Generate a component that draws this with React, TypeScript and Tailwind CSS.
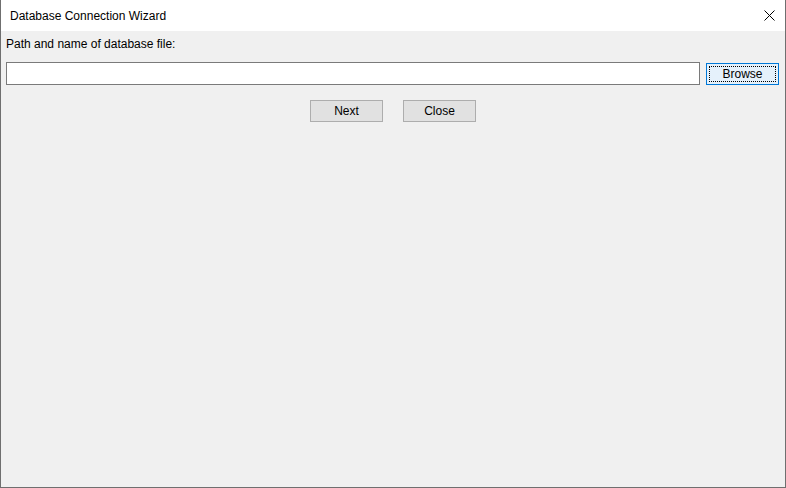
export default function App() {
  return (
    <div
      className="w-[786px] h-[488px] flex flex-col bg-[#f0f0f0] border-x border-b border-[#6f6f6f] text-[12px] text-black overflow-hidden"
      style={{ fontFamily: '"Liberation Sans", Arial, sans-serif' }}
    >
      {/* Title bar */}
      <div className="h-[31px] bg-white flex items-center justify-between shrink-0">
        <span className="pl-[9px] text-[12px]">Database Connection Wizard</span>
        <button className="h-[31px] pr-[10px] flex items-center justify-center">
          <svg width="11" height="11" viewBox="0 0 11 11">
            <path d="M0.5 0.5L10.5 10.5M10.5 0.5L0.5 10.5" stroke="#000" strokeWidth="1" fill="none" />
          </svg>
        </button>
      </div>

      {/* Body */}
      <div className="flex flex-col px-[5px]">
        <div className="h-[24px] flex items-center mt-[1px]">Path and name of database file:</div>
        <div className="flex items-center mt-[6px] h-[23px]">
          <input className="w-[694px] h-[23px] bg-white border border-[#7a7a7a] outline-none" />
          <button className="ml-[6px] w-[73px] h-[22px] mt-[1px] bg-[#e5f1fb] border border-[#0078d7] p-[2px]">
            <span className="flex items-center justify-center w-full h-full border border-dotted border-black leading-none">
              Browse
            </span>
          </button>
        </div>
        <div className="flex justify-center gap-[20px] mt-[15px]">
          <button className="w-[73px] h-[22px] bg-[#e1e1e1] border border-[#adadad] leading-none">Next</button>
          <button className="w-[73px] h-[22px] bg-[#e1e1e1] border border-[#adadad] leading-none">Close</button>
        </div>
      </div>
    </div>
  );
}
